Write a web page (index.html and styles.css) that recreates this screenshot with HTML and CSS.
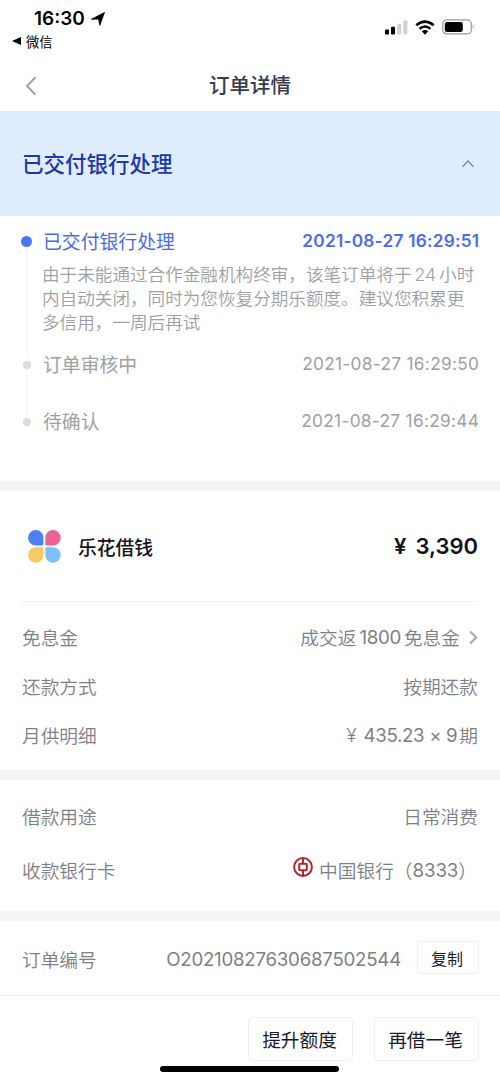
FILE: index.html
```html
<!DOCTYPE html>
<html lang="zh-CN">
<head>
<meta charset="utf-8">
<meta name="viewport" content="width=device-width, initial-scale=1">
<title>订单详情</title>
<link rel="stylesheet" href="styles.css">
</head>
<body>
<div class="screen">
  <header class="status">
    <div class="status-left">
      <div class="clock"><span>16:30</span>
        <svg class="locate" viewBox="0 0 14 14"><path stroke="#000" stroke-width=".8" stroke-linejoin="round" d="M13.500.5 8.800 13.300 7.600 7.100.5 7.200Z"/></svg>
      </div>
      <div class="return"><svg class="return-arrow" viewBox="0 0 9 8"><path d="M0 4 9 0V8Z"/></svg><span>微信</span></div>
    </div>
    <div class="status-right">
      <svg class="signal" viewBox="0 0 23 15"><rect x="0" y="9.500" width="4" height="5" rx="1"/><rect x="6" y="6.800" width="4" height="7.700" rx="1"/><rect class="off" x="12.200" y="3.700" width="4" height="10.800" rx="1"/><rect class="off" x="18.300" y=".5" width="4" height="14" rx="1"/></svg>
      <svg class="wifi" viewBox="0 0 20 15"><path d="M1.300 5.300Q10-2.100 18.700 5.300" /><path d="M4.600 8.800Q10 4.200 15.400 8.800"/><path class="dot" d="M6.800 11.300Q10 8.700 13.200 11.300L10 14.700Z"/></svg>
      <svg class="battery" viewBox="0 0 33 16"><rect class="shell" x=".7" y=".9" width="28.600" height="14" rx="4"/><rect x="2.800" y="2.900" width="18" height="10" rx="2.200"/><path class="tip" d="M30.800 5.500Q32.600 7.800 30.800 10.300Z"/></svg>
    </div>
  </header>
  <nav class="nav">
    <svg class="back" viewBox="0 0 12 20"><path d="M10.500 1.200 2 10l8.500 8.800"/></svg>
    <h1 class="nav-title">订单详情</h1>
  </nav>
  <section class="banner">
    <h2 class="banner-title">已交付银行处理</h2>
    <svg class="chevron-up" viewBox="0 0 14 9"><path d="M1.500 7.700 7 2l5.500 5.700"/></svg>
  </section>
  <ol class="timeline">
    <li class="step step-active">
      <div class="step-head"><span class="step-name">已交付银行处理</span><time class="step-time">2021-08-27 16:29:51</time></div>
      <p class="step-desc">由于未能通过合作金融机构终审，该笔订单将于<span class="num">24</span>小时<br>内自动关闭，同时为您恢复分期乐额度。建议您积累更<br>多信用，一周后再试</p>
    </li>
    <li class="step">
      <div class="step-head"><span class="step-name">订单审核中</span><time class="step-time">2021-08-27 16:29:50</time></div>
    </li>
    <li class="step">
      <div class="step-head"><span class="step-name">待确认</span><time class="step-time">2021-08-27 16:29:44</time></div>
    </li>
  </ol>
  <section class="card card-loan">
    <div class="product">
      <svg class="logo" viewBox="0 0 33 33"><path fill="#4b80f1" d="M7.800 0A7.600 7.600 0 0 1 15.400 7.600V14.100A1.300 1.300 0 0 1 14.100 15.400H7.800A7.700 7.700 0 0 1 7.800 0Z"/><path fill="#ea6396" d="M25 0A7.700 7.700 0 0 1 25 15.400H18.600A1.300 1.300 0 0 1 17.300 14.100V7.700A7.700 7.700 0 0 1 25 0Z"/><path fill="#f6ca67" d="M7.700 17.300H14.100A1.300 1.300 0 0 1 15.400 18.600V25A7.700 7.700 0 1 1 7.700 17.300Z"/><path fill="#7dc0fc" d="M18.600 17.300H25A7.700 7.700 0 1 1 17.300 25V18.600A1.300 1.300 0 0 1 18.600 17.300Z"/></svg>
      <span class="product-name">乐花借钱</span>
      <span class="amount"><span class="yen">¥</span>3,390</span>
    </div>
    <div class="row"><span>免息金</span><span class="value">成交返<span class="num">1800</span>免息金<svg class="chevron-right" viewBox="0 0 9 15"><path d="m1.200 1.500 6 6-6 6"/></svg></span></div>
    <div class="row"><span>还款方式</span><span class="value">按期还款</span></div>
    <div class="row"><span>月供明细</span><span class="value"><span class="yen">¥</span><span class="formula">435.23 × 9</span>期</span></div>
  </section>
  <section class="card card-bank">
    <div class="row"><span>借款用途</span><span class="value">日常消费</span></div>
    <div class="row row-bank"><span>收款银行卡</span><span class="value"><svg class="boc" viewBox="0 0 20 20"><circle cx="10" cy="10" r="8.900"/><rect x="6.200" y="6.800" width="7.600" height="6.400" rx="1"/><path d="M10 1V6.800M10 13.200V19"/></svg>中国银行（<span class="digits">8333</span>）</span></div>
  </section>
  <section class="order">
    <span>订单编号</span>
    <span class="order-id">O20210827630687502544</span>
    <button class="copy">复制</button>
  </section>
  <footer class="actions">
    <button class="action">提升额度</button>
    <button class="action">再借一笔</button>
  </footer>
  <div class="home"></div>
</div>
</body>
</html>
```
FILE: styles.css
```css
* { box-sizing: border-box; margin: 0; padding: 0; }
body { background: #fff; font-family: Inter, "Noto Sans CJK SC", sans-serif; font-size: 18.7px; font-weight: 350; color: #7e7f85; }
svg { display: block; flex: none; }
button { font-family: inherit; font-weight: 400; background: #fff; border: 1px solid #f0f0f2; color: #171a2c; white-space: nowrap; }
.screen { width: 500px; height: 1082px; display: flex; flex-direction: column; overflow: hidden; white-space: nowrap; }

.status { height: 60px; display: flex; justify-content: space-between; padding: 6px 26px 0 12px; color: #000; }
.clock { display: flex; align-items: center; gap: 6px; padding-left: 22px; height: 25px; font-size: 19px; font-weight: 600; }
.locate { width: 14px; height: 14px; }
.return { display: flex; align-items: center; gap: 5px; height: 20px; font-size: 13.3px; font-weight: 400; }
.return-arrow { width: 9px; height: 8px; }
.status-right { display: flex; align-items: center; height: 42px; }
.signal { width: 23px; height: 15px; margin-right: 7px; }
.signal .off { fill: #d0d0d0; }
.wifi { width: 20px; height: 15px; margin-right: 7px; }
.wifi path { fill: none; stroke: #000; stroke-width: 2.6; }
.wifi .dot { fill: #000; stroke: none; }
.battery { width: 33px; height: 16px; margin-right: -1px; }
.battery .shell { fill: none; stroke: #999; stroke-width: 1.2; }
.battery .tip { fill: #888; }

.nav { height: 51px; display: grid; grid-template-columns: 60px 1fr 60px; align-items: center; color: #363a4c; }
.back { width: 12px; height: 20px; margin-left: 25px; }
.back path { fill: none; stroke: #a2a2a4; stroke-width: 2; }
.nav-title { font-size: 20.5px; font-weight: 500; line-height: 30px; text-align: center; }

.banner { height: 105px; background: #e0edfe; display: flex; align-items: center; justify-content: space-between; padding: 0 25px 0 22px; }
.banner-title { font-size: 21.5px; font-weight: 500; line-height: 30px; color: #1d3aa8; }
.chevron-up { width: 14px; height: 9px; }
.chevron-up path { fill: none; stroke: #7e8a9c; stroke-width: 1.5; }

.timeline { list-style: none; height: 265px; padding: 13px 21px 0 43px; color: #a0a0a3; }
.step { position: relative; height: 57px; }
.step::before { content: ""; position: absolute; left: -20px; top: 9px; width: 8px; height: 8px; border-radius: 50%; background: #dcdcde; }
.step:not(:last-child)::after { content: ""; position: absolute; left: -17px; top: 19px; bottom: -7px; width: 1px; background: #f4f4f6; }
.step-active { height: 123px; }
.step-active::before { left: -22px; top: 7px; width: 11px; height: 11px; background: #4a76ee; }
.step-head { display: flex; justify-content: space-between; align-items: center; height: 24px; line-height: 24px; font-size: 18.85px; }
.step-name { padding-top: 3px; font-weight: 400; }
.step-time { font-size: 17.3px; font-weight: 400; letter-spacing: .3px; margin-right: -.3px; }
.step-active .step-head { color: #4b6ce8; }
.step-active .step-time { font-weight: 600; letter-spacing: .22px; }
.step-desc { margin: 10px 0 0 -1px; font-size: 17.6px; line-height: 24px; }
.num { margin: 0 3px; }

.card { border-top: 10px solid #f4f4f4; }
.card-loan { height: 289px; padding: 0 21px; }
.product { height: 111px; display: flex; align-items: center; border-bottom: 1px solid #f2f2f4; padding: 0 1px 0 7px; margin-bottom: 10px; color: #10121f; }
.logo { width: 33px; height: 33px; margin-right: 17px; }
.product-name { font-size: 18.8px; font-weight: 500; }
.amount { margin-left: auto; font-size: 22px; font-weight: 600; }
.amount .yen { margin-right: 9px; }
.row { height: 49px; display: flex; align-items: center; justify-content: space-between; padding: 0 1px; }
.value { display: flex; align-items: center; }
.value .num { letter-spacing: -.3px; font-weight: 400; padding-top: 2px; }
.value .yen { margin-right: 7px; padding-top: 2px; }
.formula { margin-right: 2px; letter-spacing: -.35px; font-weight: 400; padding-top: 2px; }
.chevron-right { width: 9px; height: 15px; margin: 1px 0 0 9px; }
.chevron-right path { fill: none; stroke: #a8a8ac; stroke-width: 2; }
.card-bank { height: 141px; padding: 11px 21px 0; }
.row-bank { height: 59px; }
.row-bank .value { margin-right: 1px; }
.digits { font-weight: 400; letter-spacing: -.1px; padding-top: 2px; }
.boc { width: 20px; height: 20px; margin: -5px 6px 0 0; }
.boc * { fill: none; stroke: #ad292e; stroke-width: 2; }

.order { height: 85px; display: flex; align-items: center; border-top: 10px solid #f4f4f4; border-bottom: 1px solid #f0f0f2; padding: 0 21px 0 22px; }
.order-id { margin: 2px 0 0 auto; letter-spacing: -.25px; font-weight: 400; }
.copy { width: 62px; height: 33px; margin: -1px 0 0 16px; border-radius: 3px; font-size: 16px; padding-right: 2px; }
.actions { height: 70px; display: flex; justify-content: flex-end; gap: 21px; padding: 21px 21px 0 0; }
.action { width: 105px; height: 44px; border-radius: 4px; font-size: 18.7px; padding: 0 2px 2px 0; }
.home { width: 179px; height: 6px; border-radius: 3px; background: #000; margin: 0 auto 0 160px; }
```
